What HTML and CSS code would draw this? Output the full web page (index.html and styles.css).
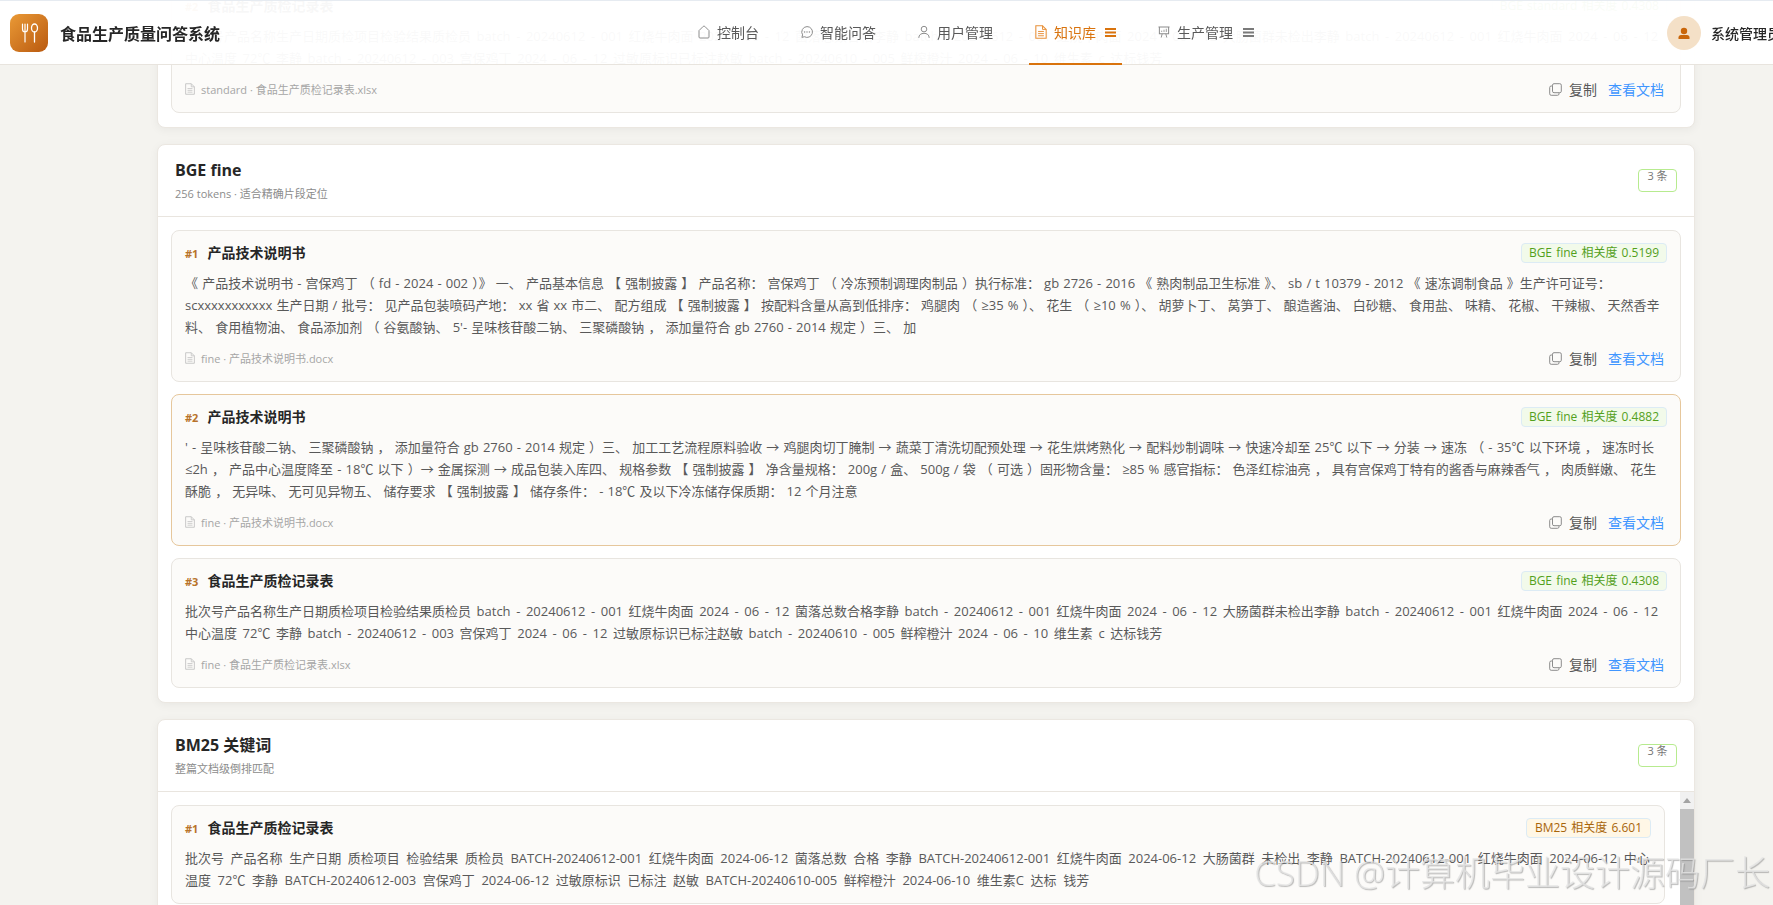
FILE: index.html
```html
<!DOCTYPE html>
<html lang="zh-CN">
<head>
    <meta charset="UTF-8">
    <title>食品生产质量问答系统</title>
    <link rel="stylesheet" href="styles.css">
</head>
<body>
    <svg class="icon-defs" width="0" height="0">
        <symbol id="i-home" viewBox="0 0 12 14"><path d="M1 5.600 5.200 1.400a1.100 1.100 0 0 1 1.600 0L11 5.600V12a1 1 0 0 1-1 1H2a1 1 0 0 1-1-1Z" fill="none" stroke="currentColor"/></symbol>
        <symbol id="i-chat" viewBox="0 0 12 12"><path d="M6 .6a5.400 5.400 0 1 1-2.600 10.100L.9 11.400l.7-2.500A5.400 5.400 0 0 1 6 .6Z" fill="none" stroke="currentColor"/><circle cx="3.600" cy="6" r=".7" fill="currentColor"/><circle cx="6" cy="6" r=".7" fill="currentColor"/><circle cx="8.400" cy="6" r=".7" fill="currentColor"/></symbol>
        <symbol id="i-user" viewBox="0 0 12 13"><circle cx="6" cy="3.600" r="2.800" fill="none" stroke="currentColor"/><path d="M.8 12.400c0-3 2.200-4.600 5.200-4.600s5.200 1.600 5.200 4.600" fill="none" stroke="currentColor"/></symbol>
        <symbol id="i-doc" viewBox="0 0 11 13"><path d="M.7.7h6.200l3.400 3.400v8.200H.7Z" fill="none" stroke="currentColor"/><path d="M6.900.7v3.400h3.400M2.800 6h5.400M2.800 8h5.400M2.800 10h5.400" fill="none" stroke="currentColor" stroke-width=".9"/></symbol>
        <symbol id="i-screen" viewBox="0 0 13 13"><path d="M.5 1h12M1.500 1v7.500h10V1" fill="none" stroke="currentColor" stroke-width="1.100"/><path d="M4 6.500V5M6.500 6.500V4M9 6.500V3" stroke="currentColor" stroke-width=".9"/><path d="M4.500 8.500 3.500 12.500M8.500 8.500l1 4" stroke="currentColor"/></symbol>
        <symbol id="i-list" viewBox="0 0 11 9"><path d="M0 1h11M0 4.500h11M0 8h11" stroke="currentColor" stroke-width="1.800"/></symbol>
        <symbol id="i-copy" viewBox="0 0 13 13"><rect x="3.500" y=".7" width="8.800" height="9" rx="1.500" fill="none" stroke="currentColor"/><path d="M3.500 3H2.200A1.500 1.500 0 0 0 .7 4.500v6.300a1.500 1.500 0 0 0 1.500 1.500h6.300a1.500 1.500 0 0 0 1.500-1.500V9.700" fill="none" stroke="currentColor"/></symbol>
    </svg>

    <header class="topbar">
        <div class="brand">
            <div class="logo">
                <svg width="38" height="38" viewBox="0 0 38 38">
                    <path d="M12.500 10v5c0 1.800 1 3 2.500 3s2.500-1.200 2.500-3v-5M15 10v18" fill="none" stroke="#fff" stroke-width="1.200" stroke-linecap="round"/>
                    <ellipse cx="24.500" cy="14" rx="3" ry="4" fill="none" stroke="#fff" stroke-width="1.300"/>
                    <path d="M24.500 18v10" stroke="#fff" stroke-width="1.300" stroke-linecap="round"/>
                </svg>
            </div>
            <span class="brand-name">食品生产质量问答系统</span>
        </div>
        <nav class="nav">
            <a class="nav-item"><svg class="nav-icon"><use href="#i-home"/></svg>控制台</a>
            <a class="nav-item"><svg class="nav-icon"><use href="#i-chat"/></svg>智能问答</a>
            <a class="nav-item"><svg class="nav-icon"><use href="#i-user"/></svg>用户管理</a>
            <a class="nav-item active"><svg class="nav-icon"><use href="#i-doc"/></svg>知识库<svg class="nav-more"><use href="#i-list"/></svg></a>
            <a class="nav-item"><svg class="nav-icon"><use href="#i-screen"/></svg>生产管理<svg class="nav-more"><use href="#i-list"/></svg></a>
        </nav>
        <div class="user">
            <div class="avatar">
                <svg width="34" height="34" viewBox="0 0 34 34"><circle cx="17" cy="15" r="3.200" fill="#c9660a"/><path d="M11.500 23v-1.500c0-1.500 1-2.500 2.500-2.500h6c1.500 0 2.500 1 2.500 2.500V23Z" fill="#c9660a"/></svg>
            </div>
            <span class="user-name">系统管理员</span>
        </div>
    </header>

    <main class="content">
        <section class="panel">
            <div class="panel-head">
                <div>
                    <h2>BGE standard</h2>
                    <p class="panel-sub">512 tokens · 适合通用语义检索</p>
                </div>
                <span class="count">3 条</span>
            </div>
            <div class="panel-body">
                <article class="item">
                    <div class="item-head">
                        <div class="item-title"><span class="rank">#2</span>食品生产质检记录表</div>
                        <span class="tag green">BGE standard 相关度 0.4308</span>
                    </div>
                    <p class="item-text spaced">批次号产品名称生产日期质检项目检验结果质检员 batch - 20240612 - 001 红烧牛肉面 2024 - 06 - 12 菌落总数合格李静 batch - 20240612 - 001 红烧牛肉面 2024 - 06 - 12 大肠菌群未检出李静 batch - 20240612 - 001 红烧牛肉面 2024 - 06 - 12<br>中心温度 72℃ 李静 batch - 20240612 - 003 宫保鸡丁 2024 - 06 - 12 过敏原标识已标注赵敏 batch - 20240610 - 005 鲜榨橙汁 2024 - 06 - 10 维生素 c 达标钱芳</p>
                    <div class="item-foot">
                        <span class="file"><svg class="file-icon"><use href="#i-doc"/></svg>standard · 食品生产质检记录表.xlsx</span>
                        <div class="actions"><a class="copy"><svg class="copy-icon"><use href="#i-copy"/></svg>复制</a><a class="view">查看文档</a></div>
                    </div>
                </article>
            </div>
        </section>

        <section class="panel">
            <div class="panel-head">
                <div>
                    <h2>BGE fine</h2>
                    <p class="panel-sub">256 tokens · 适合精确片段定位</p>
                </div>
                <span class="count">3 条</span>
            </div>
            <div class="panel-body">
                <article class="item">
                    <div class="item-head">
                        <div class="item-title"><span class="rank">#1</span>产品技术说明书</div>
                        <span class="tag green">BGE fine 相关度 0.5199</span>
                    </div>
                    <p class="item-text">《 产品技术说明书 - 宫保鸡丁 （ fd - 2024 - 002 ）》 一、 产品基本信息 【 强制披露 】 产品名称： 宫保鸡丁 （ 冷冻预制调理肉制品 ）执行标准： gb 2726 - 2016 《 熟肉制品卫生标准 》、 sb / t 10379 - 2012 《 速冻调制食品 》生产许可证号：<br>scxxxxxxxxxxx 生产日期 / 批号： 见产品包装喷码产地： xx 省 xx 市二、 配方组成 【 强制披露 】 按配料含量从高到低排序： 鸡腿肉 （ ≥35 % ）、 花生 （ ≥10 % ）、 胡萝卜丁、 莴笋丁、 酿造酱油、 白砂糖、 食用盐、 味精、 花椒、 干辣椒、 天然香辛<br>料、 食用植物油、 食品添加剂 （ 谷氨酸钠、 5'- 呈味核苷酸二钠、 三聚磷酸钠 ， 添加量符合 gb 2760 - 2014 规定 ）三、 加</p>
                    <div class="item-foot">
                        <span class="file"><svg class="file-icon"><use href="#i-doc"/></svg>fine · 产品技术说明书.docx</span>
                        <div class="actions"><a class="copy"><svg class="copy-icon"><use href="#i-copy"/></svg>复制</a><a class="view">查看文档</a></div>
                    </div>
                </article>
                <article class="item hit">
                    <div class="item-head">
                        <div class="item-title"><span class="rank">#2</span>产品技术说明书</div>
                        <span class="tag green">BGE fine 相关度 0.4882</span>
                    </div>
                    <p class="item-text">' - 呈味核苷酸二钠、 三聚磷酸钠 ， 添加量符合 gb 2760 - 2014 规定 ）三、 加工工艺流程原料验收 → 鸡腿肉切丁腌制 → 蔬菜丁清洗切配预处理 → 花生烘烤熟化 → 配料炒制调味 → 快速冷却至 25℃ 以下 → 分装 → 速冻 （ - 35℃ 以下环境 ， 速冻时长<br>≤2h ， 产品中心温度降至 - 18℃ 以下 ）→ 金属探测 → 成品包装入库四、 规格参数 【 强制披露 】 净含量规格： 200g / 盒、 500g / 袋 （ 可选 ）固形物含量： ≥85 % 感官指标： 色泽红棕油亮 ， 具有宫保鸡丁特有的酱香与麻辣香气 ， 肉质鲜嫩、 花生<br>酥脆 ， 无异味、 无可见异物五、 储存要求 【 强制披露 】 储存条件： - 18℃ 及以下冷冻储存保质期： 12 个月注意</p>
                    <div class="item-foot">
                        <span class="file"><svg class="file-icon"><use href="#i-doc"/></svg>fine · 产品技术说明书.docx</span>
                        <div class="actions"><a class="copy"><svg class="copy-icon"><use href="#i-copy"/></svg>复制</a><a class="view">查看文档</a></div>
                    </div>
                </article>
                <article class="item">
                    <div class="item-head">
                        <div class="item-title"><span class="rank">#3</span>食品生产质检记录表</div>
                        <span class="tag green">BGE fine 相关度 0.4308</span>
                    </div>
                    <p class="item-text spaced">批次号产品名称生产日期质检项目检验结果质检员 batch - 20240612 - 001 红烧牛肉面 2024 - 06 - 12 菌落总数合格李静 batch - 20240612 - 001 红烧牛肉面 2024 - 06 - 12 大肠菌群未检出李静 batch - 20240612 - 001 红烧牛肉面 2024 - 06 - 12<br>中心温度 72℃ 李静 batch - 20240612 - 003 宫保鸡丁 2024 - 06 - 12 过敏原标识已标注赵敏 batch - 20240610 - 005 鲜榨橙汁 2024 - 06 - 10 维生素 c 达标钱芳</p>
                    <div class="item-foot">
                        <span class="file"><svg class="file-icon"><use href="#i-doc"/></svg>fine · 食品生产质检记录表.xlsx</span>
                        <div class="actions"><a class="copy"><svg class="copy-icon"><use href="#i-copy"/></svg>复制</a><a class="view">查看文档</a></div>
                    </div>
                </article>
            </div>
        </section>

        <section class="panel">
            <div class="panel-head">
                <div>
                    <h2>BM25 关键词</h2>
                    <p class="panel-sub">整篇文档级倒排匹配</p>
                </div>
                <span class="count">3 条</span>
            </div>
            <div class="scroll-row">
                <div class="panel-body scroll-list">
                    <article class="item">
                        <div class="item-head">
                            <div class="item-title"><span class="rank">#1</span>食品生产质检记录表</div>
                            <span class="tag orange">BM25 相关度 6.601</span>
                        </div>
                        <p class="item-text batch">批次号 产品名称 生产日期 质检项目 检验结果 质检员 BATCH-20240612-001 红烧牛肉面 2024-06-12 菌落总数 合格 李静 BATCH-20240612-001 红烧牛肉面 2024-06-12 大肠菌群 未检出 李静 BATCH-20240612-001 红烧牛肉面 2024-06-12 中心<br>温度 72℃ 李静 BATCH-20240612-003 宫保鸡丁 2024-06-12 过敏原标识 已标注 赵敏 BATCH-20240610-005 鲜榨橙汁 2024-06-10 维生素C 达标 钱芳</p>
                    </article>
                </div>
                <div class="scrollbar">
                    <div class="scroll-arrow"></div>
                    <div class="scroll-thumb"></div>
                </div>
            </div>
        </section>
    </main>

    <div class="watermark">CSDN @计算机毕业设计源码厂长</div>
</body>
</html>
```

FILE: styles.css
```css
html, body {
    margin: 0;
    height: 100%;
    overflow: hidden;
}
body {
    background-color: #f4f3ef;
    font-family: "Open Sans", "Noto Sans CJK SC", sans-serif;
    font-size: 13px;
    color: #262626;
}
.icon-defs {
    position: absolute;
}
h2, p {
    margin: 0;
}
a {
    cursor: pointer;
}

/* top bar, lies over the scrolled list */
.topbar {
    position: fixed;
    top: 0;
    left: 0;
    right: 0;
    z-index: 5;
    height: 65px;
    box-sizing: border-box;
    display: flex;
    align-items: stretch;
    white-space: nowrap;
    background-color: rgba(255, 255, 255, 0.965);
    border-top: 1px solid #e6ebf1;
    border-bottom: 1px solid #e8e4de;
}
.brand {
    flex: none;
    width: 692px;
    box-sizing: border-box;
    padding-left: 10px;
    display: flex;
    align-items: center;
    gap: 12px;
}
.logo {
    width: 38px;
    height: 38px;
    border-radius: 9px;
    background: linear-gradient(135deg, #ea9a36, #b9590f);
}
.brand-name {
    font-size: 16px;
    font-weight: 700;
    color: #262626;
}
.nav {
    display: flex;
    gap: 30px;
}
.nav-item {
    display: flex;
    align-items: center;
    padding: 0 6px;
    font-size: 14px;
    color: #595959;
    border-bottom: 2px solid transparent;
    margin-bottom: -1px;
}
.nav-item.active {
    color: #d9730d;
    border-bottom-color: #d9730d;
}
.nav-icon {
    width: 12px;
    height: 14px;
    margin-right: 7px;
    color: #8c8c8c;
}
.active .nav-icon {
    color: #e8913a;
}
.nav-more {
    width: 11px;
    height: 9px;
    margin-left: 10px;
    color: #7a7a7a;
}
.active .nav-more {
    margin-left: 9px;
    color: #d9730d;
}
.user {
    flex: none;
    display: flex;
    align-items: center;
    gap: 10px;
    margin-left: 407px;
}
.avatar {
    width: 34px;
    height: 34px;
    border-radius: 50%;
    background-color: #f4e0c7;
}
.user-name {
    font-size: 14px;
    font-weight: 500;
    color: #262626;
}

/* result panels */
.content {
    margin-top: -103px;
    padding: 0 78px 0 157px;
    display: flex;
    flex-direction: column;
    gap: 16px;
}
.panel {
    background-color: #fff;
    border: 1px solid #ebe7e1;
    border-radius: 8px;
    box-shadow: 0 2px 10px rgba(0, 0, 0, 0.05);
}
.panel-head {
    height: 72px;
    box-sizing: border-box;
    padding: 0 17px;
    display: flex;
    justify-content: space-between;
    align-items: center;
    border-bottom: 1px solid #e9e5df;
}
h2 {
    font-size: 16px;
    font-weight: 700;
    line-height: 22px;
    color: #262626;
}
.panel-sub {
    margin-top: 5px;
    font-size: 11px;
    line-height: 16px;
    color: #8c8c8c;
}
.count {
    width: 39px;
    height: 23px;
    box-sizing: border-box;
    text-align: center;
    font-size: 11px;
    line-height: 11px;
    color: #777;
    border: 1px solid #b7eb8f;
    border-radius: 4px;
}
.panel-body {
    padding: 13px 13px 14px;
    display: flex;
    flex-direction: column;
    gap: 12px;
}

/* the last list has its own scrollbar */
.scroll-row {
    display: flex;
}
.scroll-list {
    flex: 1;
    min-width: 0;
    padding-right: 15px;
}
.scrollbar {
    flex: none;
    width: 14px;
    display: flex;
    flex-direction: column;
    background-color: #f1f1f1;
}
.scroll-arrow {
    width: 0;
    height: 0;
    margin: 6px auto 6px;
    border-left: 4px solid transparent;
    border-right: 4px solid transparent;
    border-bottom: 5px solid #a3a3a3;
}
.scroll-thumb {
    flex: 1;
    background-color: #c1c1c1;
}

/* one hit */
.item {
    flex: none;
    padding: 12px 13px 12px;
    background-color: #fcfbf9;
    border: 1px solid #e8e5e0;
    border-radius: 8px;
}
.item.hit {
    border-color: #e6c79c;
}
.item-head {
    display: flex;
    justify-content: space-between;
    align-items: center;
    height: 20px;
}
.item-title {
    padding-bottom: 2px;
    font-size: 14px;
    font-weight: 700;
    color: #262626;
}
.rank {
    margin-right: 9px;
    font-size: 11px;
    color: #b8732a;
}
.tag {
    height: 20px;
    box-sizing: border-box;
    padding: 0 7px;
    font-size: 12px;
    line-height: 18px;
    word-spacing: 1px;
    border-radius: 4px;
    border: 1px solid #dcebf5;
}
.tag.green {
    color: #52a01c;
    background-color: #f2faea;
}
.tag.orange {
    padding: 0 8px;
    color: #a8650a;
    background-color: #fff7e6;
}
.item-text {
    margin-top: 9px;
    line-height: 22px;
    word-spacing: 0.75px;
    color: #595959;
    white-space: nowrap;
}
.item-text.spaced {
    word-spacing: 2.2px;
}
.item-text.batch {
    word-spacing: 3.2px;
}
.item-foot {
    margin-top: 9px;
    height: 22px;
    display: flex;
    justify-content: space-between;
    align-items: center;
}
.file {
    display: flex;
    align-items: center;
    font-size: 11px;
    color: #a6a6a6;
}
.file-icon {
    width: 10px;
    height: 12px;
    margin-right: 6px;
    color: #c4c4c4;
}
.actions {
    display: flex;
    align-items: center;
    gap: 11px;
    padding-right: 3px;
    font-size: 14px;
}
.copy {
    display: flex;
    align-items: center;
    gap: 7px;
    color: #595959;
}
.copy-icon {
    width: 13px;
    height: 13px;
    color: #8c8c8c;
}
.view {
    color: #4096ff;
}

.watermark {
    position: fixed;
    right: 3px;
    bottom: 10px;
    z-index: 9;
    font-size: 35px;
    font-weight: 300;
    line-height: 44px;
    white-space: nowrap;
    color: rgba(228, 228, 228, 0.8);
    text-shadow: 1px 1px 1px rgba(120, 120, 120, 0.5);
}
```
